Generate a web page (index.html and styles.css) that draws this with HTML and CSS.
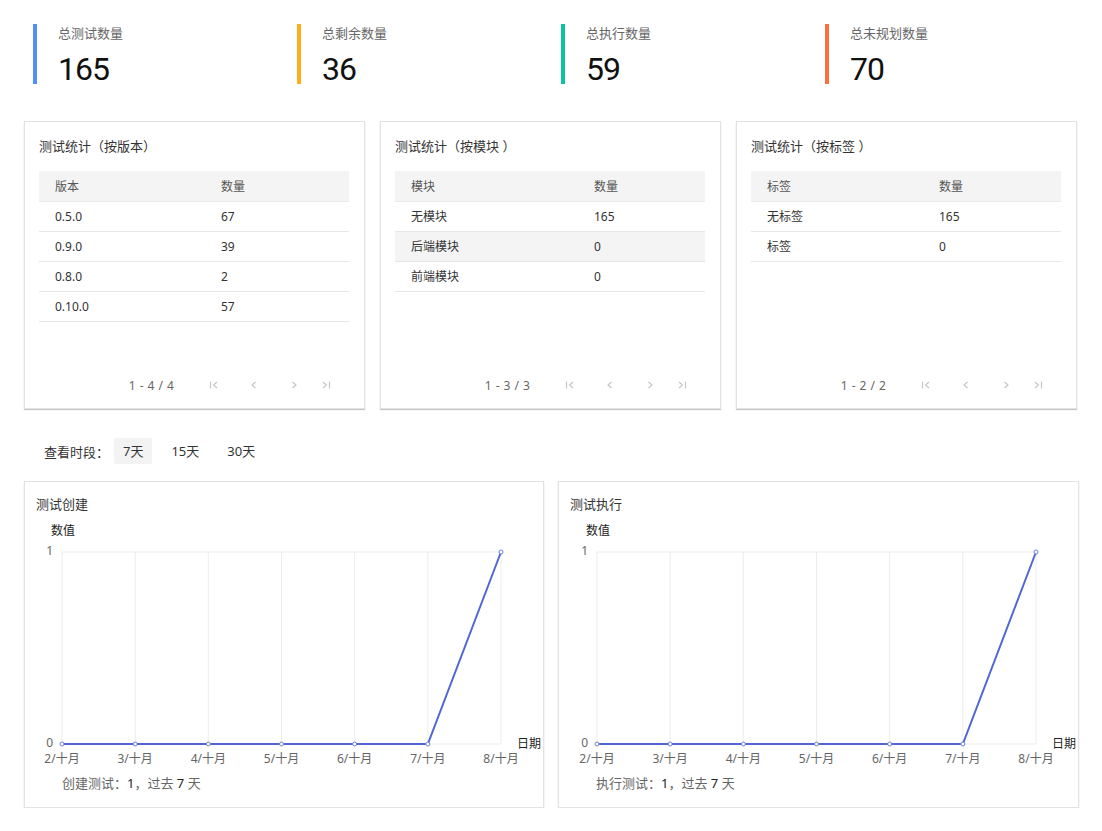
FILE: index.html
```html
<!DOCTYPE html>
<html lang="zh">
<head>
<meta charset="utf-8">
<title>测试统计</title>
<link rel="stylesheet" href="styles.css">
</head>
<body>
<div class="page">
  <div class="stats">
    <div class="stat stat-blue"><div class="stat-label">总测试数量</div><div class="stat-value">165</div></div>
    <div class="stat stat-orange"><div class="stat-label">总剩余数量</div><div class="stat-value">36</div></div>
    <div class="stat stat-teal"><div class="stat-label">总执行数量</div><div class="stat-value">59</div></div>
    <div class="stat stat-red"><div class="stat-label">总未规划数量</div><div class="stat-value">70</div></div>
  </div>

  <div class="tables">
    <div class="card">
      <div class="card-title">测试统计（按版本）</div>
      <table class="tbl tbl-version">
        <colgroup><col class="c1"><col></colgroup>
        <thead><tr><th>版本</th><th>数量</th></tr></thead>
        <tbody>
          <tr><td>0.5.0</td><td>67</td></tr>
          <tr><td>0.9.0</td><td>39</td></tr>
          <tr><td>0.8.0</td><td>2</td></tr>
          <tr><td>0.10.0</td><td>57</td></tr>
        </tbody>
      </table>
      <div class="pager">
        <span class="pg-text">1 - 4 / 4</span>
        <span class="pg-btn"><svg width="10" height="10" viewBox="0 0 10 10"><path d="M1.5 1.5V8.5M8 2L4.5 5L8 8"/></svg></span>
        <span class="pg-btn"><svg width="10" height="10" viewBox="0 0 10 10"><path d="M6.5 2L3 5L6.5 8"/></svg></span>
        <span class="pg-btn"><svg width="10" height="10" viewBox="0 0 10 10"><path d="M3.5 2L7 5L3.5 8"/></svg></span>
        <span class="pg-btn pg-last"><svg width="10" height="10" viewBox="0 0 10 10"><path d="M2 2L5.5 5L2 8M8.5 1.5V8.5"/></svg></span>
      </div>
    </div>
    <div class="card">
      <div class="card-title">测试统计（按模块 ）</div>
      <table class="tbl tbl-module">
        <colgroup><col class="c1"><col></colgroup>
        <thead><tr><th>模块</th><th>数量</th></tr></thead>
        <tbody>
          <tr><td>无模块</td><td>165</td></tr>
          <tr class="hl"><td>后端模块</td><td>0</td></tr>
          <tr><td>前端模块</td><td>0</td></tr>
        </tbody>
      </table>
      <div class="pager">
        <span class="pg-text">1 - 3 / 3</span>
        <span class="pg-btn"><svg width="10" height="10" viewBox="0 0 10 10"><path d="M1.5 1.5V8.5M8 2L4.5 5L8 8"/></svg></span>
        <span class="pg-btn"><svg width="10" height="10" viewBox="0 0 10 10"><path d="M6.5 2L3 5L6.5 8"/></svg></span>
        <span class="pg-btn"><svg width="10" height="10" viewBox="0 0 10 10"><path d="M3.5 2L7 5L3.5 8"/></svg></span>
        <span class="pg-btn pg-last"><svg width="10" height="10" viewBox="0 0 10 10"><path d="M2 2L5.5 5L2 8M8.5 1.5V8.5"/></svg></span>
      </div>
    </div>
    <div class="card">
      <div class="card-title">测试统计（按标签 ）</div>
      <table class="tbl tbl-tag">
        <colgroup><col class="c1"><col></colgroup>
        <thead><tr><th>标签</th><th>数量</th></tr></thead>
        <tbody>
          <tr><td>无标签</td><td>165</td></tr>
          <tr><td>标签</td><td>0</td></tr>
        </tbody>
      </table>
      <div class="pager">
        <span class="pg-text">1 - 2 / 2</span>
        <span class="pg-btn"><svg width="10" height="10" viewBox="0 0 10 10"><path d="M1.5 1.5V8.5M8 2L4.5 5L8 8"/></svg></span>
        <span class="pg-btn"><svg width="10" height="10" viewBox="0 0 10 10"><path d="M6.5 2L3 5L6.5 8"/></svg></span>
        <span class="pg-btn"><svg width="10" height="10" viewBox="0 0 10 10"><path d="M3.5 2L7 5L3.5 8"/></svg></span>
        <span class="pg-btn pg-last"><svg width="10" height="10" viewBox="0 0 10 10"><path d="M2 2L5.5 5L2 8M8.5 1.5V8.5"/></svg></span>
      </div>
    </div>
  </div>

  <div class="period">
    <span class="period-label">查看时段：</span>
    <span class="period-btn active">7天</span>
    <span class="period-btn">15天</span>
    <span class="period-btn">30天</span>
  </div>

  <div class="charts">
    <div class="chart-card">
      <div class="chart-title">测试创建</div>
      <svg class="chart" width="518" height="252" viewBox="0 0 518 252">
        <g class="grid">
          <line x1="37" y1="34" x2="476" y2="34"/>
          <line x1="37" y1="34" x2="37" y2="226"/>
          <line x1="110.17" y1="34" x2="110.17" y2="226"/>
          <line x1="183.33" y1="34" x2="183.33" y2="226"/>
          <line x1="256.5" y1="34" x2="256.5" y2="226"/>
          <line x1="329.67" y1="34" x2="329.67" y2="226"/>
          <line x1="402.83" y1="34" x2="402.83" y2="226"/>
          <line x1="476" y1="34" x2="476" y2="226"/>
          <line x1="37" y1="226" x2="476" y2="226"/>
        </g>
        <text class="axis-name" x="26" y="17">数值</text>
        <text class="tick" x="28" y="37" text-anchor="end">1</text>
        <text class="tick" x="28" y="229" text-anchor="end">0</text>
        <text class="axis-name" x="492" y="230">日期</text>
        <g class="tick" text-anchor="middle">
          <text x="37" y="245">2/十月</text>
          <text x="110.17" y="245">3/十月</text>
          <text x="183.33" y="245">4/十月</text>
          <text x="256.5" y="245">5/十月</text>
          <text x="329.67" y="245">6/十月</text>
          <text x="402.83" y="245">7/十月</text>
          <text x="476" y="245">8/十月</text>
        </g>
        <polyline class="series" points="37,226 110.17,226 183.33,226 256.5,226 329.67,226 402.83,226 476,34"/>
        <g class="dots">
          <circle cx="37" cy="226" r="2"/>
          <circle cx="110.17" cy="226" r="2"/>
          <circle cx="183.33" cy="226" r="2"/>
          <circle cx="256.5" cy="226" r="2"/>
          <circle cx="329.67" cy="226" r="2"/>
          <circle cx="402.83" cy="226" r="2"/>
          <circle cx="476" cy="34" r="2"/>
        </g>
      </svg>
      <div class="chart-foot">创建测试：<b>1</b>，过去 <b>7</b> 天</div>
    </div>
    <div class="chart-card">
      <div class="chart-title">测试执行</div>
      <svg class="chart" width="519" height="252" viewBox="0 0 519 252">
        <g class="grid">
          <line x1="38" y1="34" x2="477" y2="34"/>
          <line x1="38" y1="34" x2="38" y2="226"/>
          <line x1="111.17" y1="34" x2="111.17" y2="226"/>
          <line x1="184.33" y1="34" x2="184.33" y2="226"/>
          <line x1="257.5" y1="34" x2="257.5" y2="226"/>
          <line x1="330.67" y1="34" x2="330.67" y2="226"/>
          <line x1="403.83" y1="34" x2="403.83" y2="226"/>
          <line x1="477" y1="34" x2="477" y2="226"/>
          <line x1="38" y1="226" x2="477" y2="226"/>
        </g>
        <text class="axis-name" x="27" y="17">数值</text>
        <text class="tick" x="29" y="37" text-anchor="end">1</text>
        <text class="tick" x="29" y="229" text-anchor="end">0</text>
        <text class="axis-name" x="493" y="230">日期</text>
        <g class="tick" text-anchor="middle">
          <text x="38" y="245">2/十月</text>
          <text x="111.17" y="245">3/十月</text>
          <text x="184.33" y="245">4/十月</text>
          <text x="257.5" y="245">5/十月</text>
          <text x="330.67" y="245">6/十月</text>
          <text x="403.83" y="245">7/十月</text>
          <text x="477" y="245">8/十月</text>
        </g>
        <polyline class="series" points="38,226 111.17,226 184.33,226 257.5,226 330.67,226 403.83,226 477,34"/>
        <g class="dots">
          <circle cx="38" cy="226" r="2"/>
          <circle cx="111.17" cy="226" r="2"/>
          <circle cx="184.33" cy="226" r="2"/>
          <circle cx="257.5" cy="226" r="2"/>
          <circle cx="330.67" cy="226" r="2"/>
          <circle cx="403.83" cy="226" r="2"/>
          <circle cx="477" cy="34" r="2"/>
        </g>
      </svg>
      <div class="chart-foot">执行测试：<b>1</b>，过去 <b>7</b> 天</div>
    </div>
  </div>
</div>
</body>
</html>
```

FILE: styles.css
```css
* { box-sizing: border-box; }

body {
  margin: 0;
  background: #fff;
  color: #333;
  font-family: "Noto Sans", "Noto Sans CJK SC", sans-serif;
}

.page {
  width: 1078px;
  padding: 24px 0 0 24px;
}

/* ---------- stats ---------- */
.stats {
  display: grid;
  grid-template-columns: repeat(4, 264px);
  padding-left: 9px;
}

.stat {
  height: 60px;
  border-left: 4px solid #4f8ff7;
  padding-left: 21px;
}
.stat-blue { border-left-color: #4f8ff7; }
.stat-orange { border-left-color: #fdae19; }
.stat-teal { border-left-color: #0cc2a4; }
.stat-red { border-left-color: #fe6d3c; }

.stat-label {
  padding-top: 0;
  font-size: 13px;
  line-height: 18px;
  color: #666;
}

.stat-value {
  margin-top: 8px;
  font-family: Roboto, "Noto Sans", sans-serif;
  font-size: 32px;
  line-height: 38px;
  letter-spacing: -1px;
  color: #111;
}

/* ---------- table cards ---------- */
.tables {
  display: grid;
  grid-template-columns: repeat(3, 341px);
  gap: 15px;
  margin-top: 37px;
}

.card {
  height: 288px;
  display: flex;
  flex-direction: column;
  border: 1px solid #e3e3e3;
  box-shadow: 0 1px 1px rgba(0, 0, 0, 0.22);
  padding: 14px 15px 0 14px;
}

.card-title {
  font-size: 13px;
  line-height: 20px;
  color: #333;
}

.tbl {
  margin-top: 15px;
  width: 310px;
  border-collapse: collapse;
  table-layout: fixed;
  font-size: 12px;
}
.tbl-version col.c1 { width: 166px; }
.tbl-module col.c1 { width: 183px; }
.tbl-tag col.c1 { width: 172px; }

.tbl th,
.tbl td {
  height: 30px;
  padding: 0 16px;
  text-align: left;
  font-weight: normal;
  border-bottom: 1px solid #e6e6e6;
  color: #333;
}
.tbl thead th {
  background: #f4f4f4;
  color: #555;
  border-bottom-color: #e9e9e9;
}
.tbl tr.hl td { background: #f4f4f4; }

.pager {
  margin-top: auto;
  margin-bottom: 13px;
  height: 20px;
  display: flex;
  align-items: center;
  justify-content: flex-end;
  padding-right: 13px;
}
.pg-text {
  margin-right: 30px;
  font-size: 12px;
  word-spacing: 0.5px;
  letter-spacing: 0.2px;
  color: #666;
}
.pg-btn {
  width: 20px;
  height: 20px;
  display: flex;
  align-items: center;
  justify-content: center;
}
.pg-btn + .pg-btn { margin-left: 20px; }
.pg-btn.pg-last { margin-left: 12px; }
.pg-btn svg path {
  fill: none;
  stroke: #c4c4c4;
  stroke-width: 1.1;
}

/* ---------- period ---------- */
.period {
  margin-top: 29px;
  height: 26px;
  display: flex;
  align-items: center;
  padding-left: 20px;
  font-size: 13px;
}
.period-label {
  flex: none;
  width: 70px;
  white-space: nowrap;
  color: #333;
}
.period-btn {
  flex: none;
  height: 26px;
  line-height: 26px;
  padding: 0 9px;
  border-radius: 2px;
  color: #333;
}
.period-btn + .period-btn { margin-left: 10px; }
.period-btn.active { background: #f3f3f3; }

/* ---------- charts ---------- */
.charts {
  display: grid;
  grid-template-columns: 520px 521px;
  gap: 14px;
  margin-top: 17px;
}

.chart-card {
  height: 327px;
  border: 1px solid #e3e3e3;
  box-shadow: 0 1px 1px rgba(0, 0, 0, 0.22);
}

.chart-title {
  padding: 12px 11px 0;
  font-size: 13px;
  line-height: 20px;
  color: #333;
}

.chart {
  display: block;
  margin-top: 4px;
  font-family: "Noto Sans", "Noto Sans CJK SC", sans-serif;
}
.chart .grid line {
  stroke: #ececec;
  stroke-width: 1;
}
.chart .tick {
  font-size: 12px;
  fill: #666;
}
.chart .axis-name {
  font-size: 12px;
  fill: #222;
}
.chart .series {
  fill: none;
  stroke: #5166d6;
  stroke-width: 2;
}
.chart .dots circle {
  fill: #fff;
  stroke: #6d7ee0;
  stroke-width: 1;
}

.chart-foot {
  margin-top: 3px;
  padding-left: 37px;
  font-size: 13px;
  line-height: 20px;
  color: #666;
}
.chart-foot b {
  font-weight: normal;
  color: #222;
}
```
